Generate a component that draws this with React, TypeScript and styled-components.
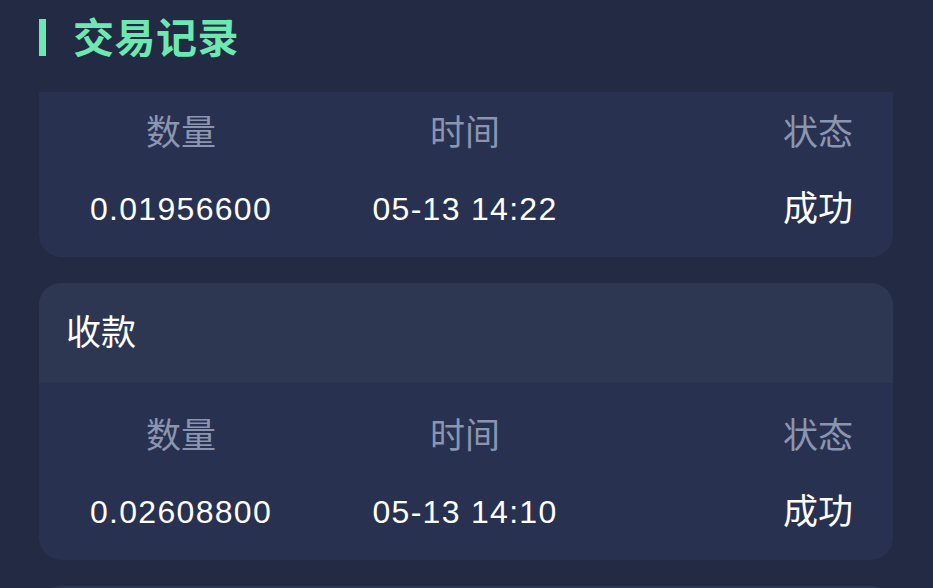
import { useLayoutEffect, useRef } from 'react'
import styled, { createGlobalStyle } from 'styled-components'

const GlobalStyle = createGlobalStyle`
  html, body {
    margin: 0;
    padding: 0;
    background: #232a43;
    font-family: "Liberation Sans", "Noto Sans CJK SC", sans-serif;
    overflow: hidden;
  }
  * { box-sizing: border-box; }
`

const Page = styled.div`
  height: 100vh;
  display: flex;
  flex-direction: column;
  background: #232a43;
`

const Header = styled.div`
  height: 92px;
  flex-shrink: 0;
  display: flex;
  align-items: center;
  padding: 0 39px 18px;
`

const Mark = styled.span`
  width: 7px;
  height: 37px;
  background: #6de8b2;
  margin-right: 27px;
`

const Title = styled.h1`
  margin: 0;
  font-family: "Noto Sans CJK SC", sans-serif;
  font-size: 41px;
  line-height: 1;
  font-weight: 700;
  color: #6de8b2;
  letter-spacing: 0.5px;
  padding-bottom: 4px;
`

const List = styled.div`
  flex: 1;
  overflow-y: auto;
  padding: 0 40px 0 39px;
  scrollbar-width: none;
  &::-webkit-scrollbar { display: none; }
`

const Card = styled.div`
  border-radius: 22px;
  overflow: hidden;
  background: #283150;
  margin-bottom: 26px;
`

const CardHead = styled.div`
  height: 100px;
  display: flex;
  align-items: center;
  padding: 0 27px 8px;
  background: #2d3752;
  font-family: "Noto Sans CJK SC", sans-serif;
  font-size: 35px;
  line-height: 1;
  color: #ffffff;
`

const CardBody = styled.div`
  padding: 30px 40px 24px;
  display: flex;
  flex-direction: column;
  gap: 27px;
`

const Row = styled.div`
  display: grid;
  grid-template-columns: 204px 364px 1fr;
  height: 48px;
  align-items: center;
`

const Cell = styled.div<{ $align: 'center' | 'right'; $label?: boolean; $cjk?: boolean }>`
  text-align: ${p => p.$align};
  font-family: ${p => (p.$label || p.$cjk ? '"Noto Sans CJK SC", sans-serif' : '"Liberation Sans", sans-serif')};
  font-size: ${p => (p.$label || p.$cjk ? '35px' : '32px')};
  line-height: 1;
  padding-bottom: ${p => (p.$label ? '10px' : p.$cjk ? '8px' : '0')};
  letter-spacing: ${p => (p.$label || p.$cjk ? '0' : '1.3px')};
  color: ${p => (p.$label ? '#8b95b0' : '#ffffff')};
  white-space: nowrap;
`

interface Record {
  kind: string
  amount: string
  time: string
  status: string
}

const records: Record[] = [
  { kind: '收款', amount: '0.01956600', time: '05-13 14:22', status: '成功' },
  { kind: '收款', amount: '0.02608800', time: '05-13 14:10', status: '成功' },
  { kind: '收款', amount: '0.02608800', time: '05-13 13:58', status: '成功' },
]

const RecordCard = ({ item }: { item: Record }) => (
  <Card>
    <CardHead>{item.kind}</CardHead>
    <CardBody>
      <Row>
        <Cell $align="center" $label>数量</Cell>
        <Cell $align="center" $label>时间</Cell>
        <Cell $align="right" $label>状态</Cell>
      </Row>
      <Row>
        <Cell $align="center">{item.amount}</Cell>
        <Cell $align="center">{item.time}</Cell>
        <Cell $align="right" $cjk>{item.status}</Cell>
      </Row>
    </CardBody>
  </Card>
)

export default function App() {
  const listRef = useRef<HTMLDivElement>(null)

  useLayoutEffect(() => {
    // the list is shown scrolled part-way through the first record
    if (listRef.current) listRef.current.scrollTop = 112
  }, [])

  return (
    <Page>
      <GlobalStyle />
      <Header>
        <Mark />
        <Title>交易记录</Title>
      </Header>
      <List ref={listRef}>
        {records.map((r, i) => (
          <RecordCard key={i} item={r} />
        ))}
      </List>
    </Page>
  )
}
